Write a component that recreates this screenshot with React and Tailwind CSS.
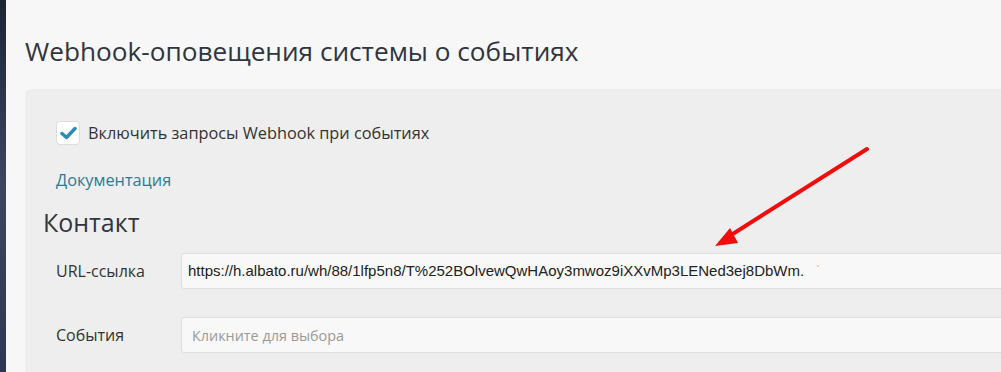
import React from "react";

const sans = { fontFamily: '"Open Sans", "Noto Sans", sans-serif' };

const Arrow = () => (
  <svg
    className="absolute left-0 top-0 pointer-events-none"
    width="1001"
    height="372"
    viewBox="0 0 1001 372"
  >
    <line x1="867" y1="149" x2="728" y2="237" stroke="#f20d0d" strokeWidth="4" strokeLinecap="round" />
    <polygon points="715,246 730,228 738,243" fill="#f20d0d" />
    <circle cx="818" cy="266" r="0.8" fill="#f5a040" />
  </svg>
);

export default function App() {
  return (
    <div
      className="relative w-[1001px] h-[372px] overflow-hidden flex bg-[#f7f7f7]"
      style={sans}
    >
      {/* sidebar edge */}
      <div className="w-[6px] shrink-0 bg-gradient-to-b from-[#1c2536] via-[#3d4660] to-[#2c3753]" />

      <div className="flex-1 flex flex-col min-w-0">
        <div className="h-[6px] bg-[#6c777e]" />
        <div className="h-[7px] bg-[#d8f2f9]" />
        <div className="h-px bg-[#dcdcdc]" />

        <div className="flex-1 pl-[19px] pt-[36px]">
          <h1 className="text-[26.2px] leading-[30px] text-[#30353f]">
            Webhook-оповещения системы о событиях
          </h1>

          <div className="mt-[23px] mr-[-40px] h-[300px] rounded-tl-[5px] bg-[#eeeeee] pl-[31px] pt-[32px]">
            <label className="flex items-center gap-[8px]">
              <span className="w-[24px] h-[24px] rounded-[4px] bg-white border border-[#dcdcdc] flex items-center justify-center">
                <svg width="17" height="14" viewBox="0 0 17 14">
                  <path d="M2 7.5 L6.5 11.5 L15 2.5" fill="none" stroke="#2b8db0" strokeWidth="3.4" strokeLinecap="round" strokeLinejoin="round" />
                </svg>
              </span>
              <span className="text-[16.3px] text-[#333]">Включить запросы Webhook при событиях</span>
            </label>

            <div className="mt-[23px] text-[16.3px] leading-[24px] text-[#2b7a98]">Документация</div>

            <h2 className="mt-[15px] ml-[-13px] text-[25px] leading-[30px] font-medium text-[#30353f]">
              Контакт
            </h2>

            <div className="mt-[16px] flex items-center">
              <span className="w-[125px] shrink-0 text-[16px] text-[#333]">URL-ссылка</span>
              <div className="flex-1 h-[36px] bg-[#f8f8f8] border border-[#dedede] rounded-[3px] flex items-center pl-[6px]">
                <span
                  className="text-[15px] text-[#222] whitespace-nowrap"
                  style={{ fontFamily: '"Liberation Sans", Arial, sans-serif' }}
                >
                  https://h.albato.ru/wh/88/1lfp5n8/T%252BOlvewQwHAoy3mwoz9iXXvMp3LENed3ej8DbWm.
                </span>
              </div>
            </div>

            <div className="mt-[28px] flex items-center">
              <span className="w-[125px] shrink-0 text-[16px] text-[#333]">События</span>
              <div className="flex-1 h-[36px] bg-[#f8f8f8] border border-[#dedede] rounded-[3px] flex items-center pl-[10px]">
                <span className="text-[14.4px] text-[#999]">Кликните для выбора</span>
              </div>
            </div>
          </div>
        </div>
      </div>

      <Arrow />
    </div>
  );
}
